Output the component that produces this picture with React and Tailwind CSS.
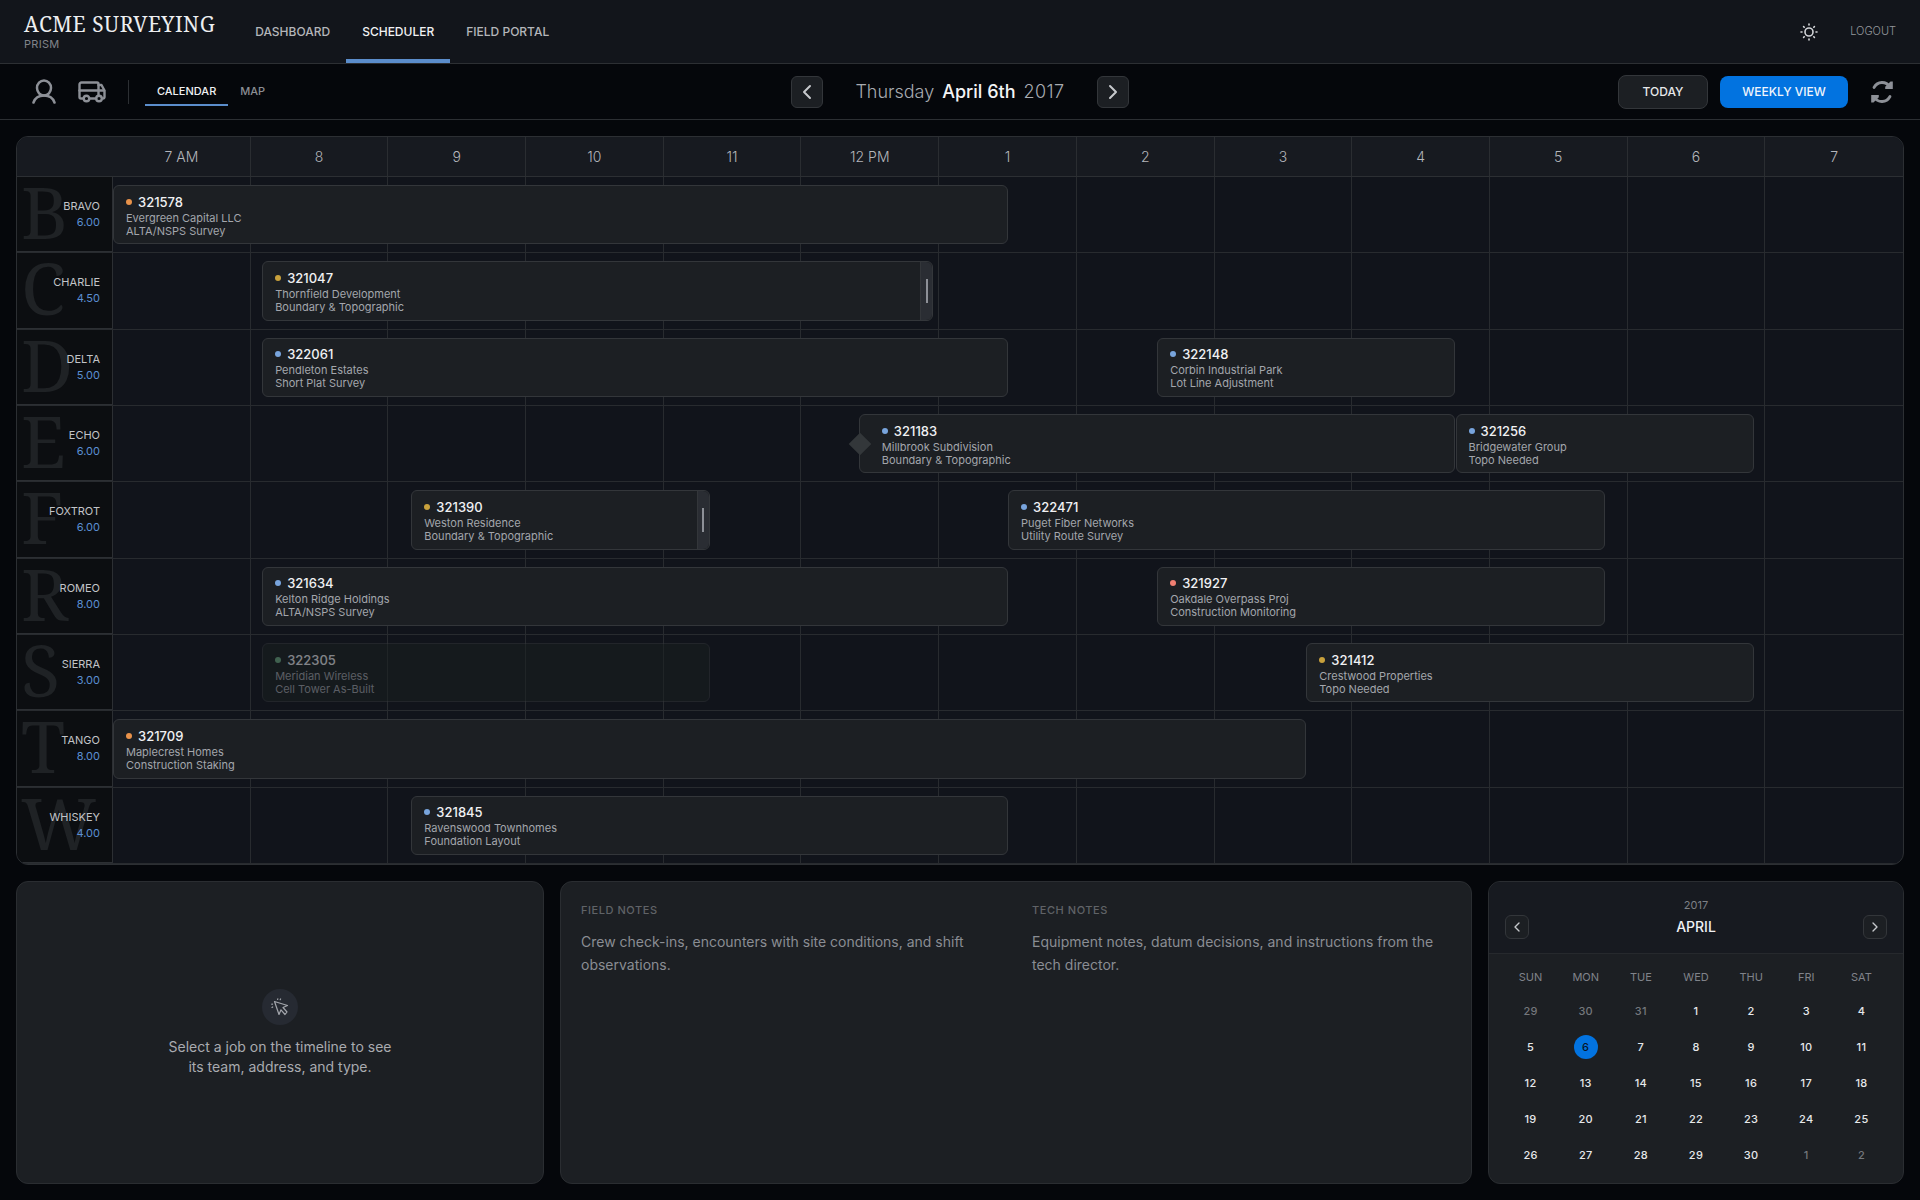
import React, { useState } from 'react';
import { ChevronLeft, ChevronRight } from 'lucide-react';

const HOURS = ['7 AM', '8', '9', '10', '11', '12 PM', '1', '2', '3', '4', '5', '6', '7'];
const WEEKDAYS = ['SUN', 'MON', 'TUE', 'WED', 'THU', 'FRI', 'SAT'];

// start and end are slots out of the 24 in the visible day
const SLOTS = 24;

const CREWS = [
  { name: 'BRAVO', hours: '6.00', jobs: [{ id: '321578', client: 'Evergreen Capital LLC', type: 'ALTA/NSPS Survey', dot: 'bg-[#e8924a]', start: 0, end: 12 }] },
  { name: 'CHARLIE', hours: '4.50', jobs: [{ id: '321047', client: 'Thornfield Development', type: 'Boundary & Topographic', dot: 'bg-[#c8a13c]', start: 2, end: 11, handle: true }] },
  {
    name: 'DELTA', hours: '5.00', jobs: [
      { id: '322061', client: 'Pendleton Estates', type: 'Short Plat Survey', dot: 'bg-[#78a4dc]', start: 2, end: 12 },
      { id: '322148', client: 'Corbin Industrial Park', type: 'Lot Line Adjustment', dot: 'bg-[#78a4dc]', start: 14, end: 18 },
    ],
  },
  {
    name: 'ECHO', hours: '6.00', jobs: [
      { id: '321183', client: 'Millbrook Subdivision', type: 'Boundary & Topographic', dot: 'bg-[#78a4dc]', start: 10, end: 18, linked: true },
      { id: '321256', client: 'Bridgewater Group', type: 'Topo Needed', dot: 'bg-[#78a4dc]', start: 18, end: 22 },
    ],
  },
  {
    name: 'FOXTROT', hours: '6.00', jobs: [
      { id: '321390', client: 'Weston Residence', type: 'Boundary & Topographic', dot: 'bg-[#c8a13c]', start: 4, end: 8, handle: true },
      { id: '322471', client: 'Puget Fiber Networks', type: 'Utility Route Survey', dot: 'bg-[#78a4dc]', start: 12, end: 20 },
    ],
  },
  {
    name: 'ROMEO', hours: '8.00', jobs: [
      { id: '321634', client: 'Kelton Ridge Holdings', type: 'ALTA/NSPS Survey', dot: 'bg-[#78a4dc]', start: 2, end: 12 },
      { id: '321927', client: 'Oakdale Overpass Proj', type: 'Construction Monitoring', dot: 'bg-[#f07f72]', start: 14, end: 20 },
    ],
  },
  {
    name: 'SIERRA', hours: '3.00', jobs: [
      { id: '322305', client: 'Meridian Wireless', type: 'Cell Tower As-Built', dot: 'bg-[#6fae84]', start: 2, end: 8, faded: true },
      { id: '321412', client: 'Crestwood Properties', type: 'Topo Needed', dot: 'bg-[#c8a13c]', start: 16, end: 22 },
    ],
  },
  { name: 'TANGO', hours: '8.00', jobs: [{ id: '321709', client: 'Maplecrest Homes', type: 'Construction Staking', dot: 'bg-[#e8924a]', start: 0, end: 16 }] },
  { name: 'WHISKEY', hours: '4.00', jobs: [{ id: '321845', client: 'Ravenswood Townhomes', type: 'Foundation Layout', dot: 'bg-[#78a4dc]', start: 4, end: 12 }] },
];

const WEEKS = [
  [29, 30, 31, 1, 2, 3, 4],
  [5, 6, 7, 8, 9, 10, 11],
  [12, 13, 14, 15, 16, 17, 18],
  [19, 20, 21, 22, 23, 24, 25],
  [26, 27, 28, 29, 30, 1, 2],
];

const App = () => {
  const [selectedDay, setSelectedDay] = useState(6);

  return (
    <div className="flex min-h-screen flex-col bg-[#05070b] font-['Inter',sans-serif] text-[#c6c8cc]">
      <TopNav />
      <Toolbar />
      <main className="flex flex-1 flex-col gap-4 p-4">
        <Timeline />
        <div className="grid h-[303px] grid-cols-[minmax(0,11fr)_minmax(0,19fr)_416px] gap-4">
          <EmptyDetails />
          <Notes />
          <MiniCalendar selectedDay={selectedDay} onSelect={setSelectedDay} />
        </div>
      </main>
    </div>
  );
};

const TopNav = () => (
  <header className="flex h-16 items-stretch border-b border-[#2c2f33] bg-[#12151b] px-6">
    <div className="flex flex-col justify-center">
      <div className="font-['Noto_Serif','DejaVu_Serif_Condensed','DejaVu_Serif',serif] text-[21px] leading-6 tracking-wide text-[#eceef0]">ACME SURVEYING</div>
      <div className="text-[11px] leading-4 tracking-wide text-[#80848a]">PRISM</div>
    </div>
    <nav className="ml-6 flex text-xs font-medium">
      <a href="#dashboard" className="flex items-center border-b-4 border-transparent px-4 pt-1 text-[#b4b6ba]">DASHBOARD</a>
      <a href="#scheduler" className="flex items-center border-b-4 border-[#5b8dcb] px-4 pt-1 text-[#f0f1f3]">SCHEDULER</a>
      <a href="#field" className="flex items-center border-b-4 border-transparent px-4 pt-1 text-[#b4b6ba]">FIELD PORTAL</a>
    </nav>
    <div className="ml-auto flex items-center gap-8">
      <button type="button" aria-label="Light mode" className="text-[#d2d4d8]">
        <SunIcon />
      </button>
      <button type="button" className="text-[11px] font-light text-[#94979c]">LOGOUT</button>
    </div>
  </header>
);

const Toolbar = () => (
  <div className="grid h-14 grid-cols-[1fr_auto_1fr] items-center border-b border-[#2c2f33] px-6">
    <div className="flex items-center pl-2">
      <button type="button" aria-label="Crews" className="text-[#8d9097]">
        <PersonIcon />
      </button>
      <button type="button" aria-label="Vehicles" className="ml-[22px] text-[#8d9097]">
        <TruckIcon />
      </button>
      <div className="ml-[22px] h-6 w-px bg-[#2c2f33]" />
      <div className="ml-4 flex text-[11px] font-medium">
        <button type="button" className="border-b-2 border-[#5b8dcb] px-3 leading-[26px] text-[#f0f1f3]">CALENDAR</button>
        <button type="button" className="border-b-2 border-transparent px-3 leading-[26px] text-[#8b8e94]">MAP</button>
      </div>
    </div>
    <div className="flex items-center gap-8">
      <SquareButton label="Previous day" className="h-8 w-8 text-[#c6c8cc]">
        <ChevronLeft size={24} strokeWidth={2} />
      </SquareButton>
      <h1 className="flex gap-2 text-lg leading-6 font-light text-[#a8abb1]">
        <span>Thursday</span>
        <span className="font-medium text-[#f3f4f6]">April 6th</span>
        <span className="tracking-wide">2017</span>
      </h1>
      <SquareButton label="Next day" className="h-8 w-8 text-[#c6c8cc]">
        <ChevronRight size={24} strokeWidth={2} />
      </SquareButton>
    </div>
    <div className="flex items-center justify-end gap-3 text-xs font-medium">
      <button type="button" className="h-[34px] w-[90px] rounded-lg border border-[#33363a] bg-[#1c1f23] text-[#e6e8ea]">TODAY</button>
      <button type="button" className="h-8 w-32 rounded-lg bg-[#0273e0] text-[#f0f5fb]">WEEKLY VIEW</button>
      <button type="button" aria-label="Refresh" className="mr-0.5 ml-2.5 text-[#8d9097]">
        <SyncIcon />
      </button>
    </div>
  </div>
);

const SquareButton = ({ label, className, children }) => (
  <button type="button" aria-label={label} className={`flex items-center justify-center rounded-md border border-[#33363a] bg-[#1c1f23] ${className}`}>
    {children}
  </button>
);

const Timeline = () => (
  <section className="flex flex-1 flex-col overflow-hidden rounded-xl border border-[#2c2f33] bg-[#11141b]">
    <div className="flex h-10 border-b border-[#2c2f33] bg-[#171a20] text-sm font-light text-[#b4b6bb]">
      <div className="w-24" />
      <div className="grid flex-1 grid-cols-13">
        {HOURS.map((hour) => (
          <div key={hour} className="flex items-center justify-center border-r border-[#2a2d31] last:border-r-0">{hour}</div>
        ))}
      </div>
    </div>
    <div className="grid flex-1 auto-rows-fr">
      {CREWS.map((crew) => <CrewRow key={crew.name} crew={crew} />)}
    </div>
  </section>
);

const CrewRow = ({ crew }) => (
  <div className="flex border-b border-[#282b2f]">
    <div className="relative flex w-24 flex-col items-end justify-center border-r border-b border-[#2c2f33] bg-[#0c0e11] pr-3 text-[11px]">
      <span aria-hidden="true" className="absolute top-0 left-1 font-['Noto_Serif','DejaVu_Serif_Condensed','DejaVu_Serif',serif] text-[72px] leading-[68px] text-[#1f2225]">{crew.name[0]}</span>
      <span className="relative leading-4 text-[#c2c4c8]">{crew.name}</span>
      <span className="relative leading-4 text-[#5b8fd2]">{crew.hours}</span>
    </div>
    <div className="relative grid flex-1 grid-cols-13">
      {HOURS.map((hour) => (
        <div key={hour} className="border-r border-[#282b2f] [&:nth-child(13)]:border-r-0" />
      ))}
      {crew.jobs.map((job) => <JobCard key={job.id} job={job} />)}
    </div>
  </div>
);

const JobCard = ({ job }) => (
  <button
    type="button"
    className={`absolute inset-y-2 rounded-md border border-[#33363a] text-left ${job.linked ? 'pl-[22px]' : 'pl-3'} ${job.faded ? 'bg-[#1a2020] opacity-50' : 'bg-[#1c1f23]'}`}
    style={{ left: `${(job.start / SLOTS) * 100}%`, width: `${((job.end - job.start) / SLOTS) * 100}%` }}
  >
    <span className="flex items-center gap-1.5 text-[13px] leading-5 font-medium text-[#f0f1f3]">
      <span className={`h-1.5 w-1.5 rounded-full ${job.dot}`} />
      {job.id}
    </span>
    <span className="block text-[11px] leading-[13px] text-[#a3a6ac]">{job.client}</span>
    <span className="block text-[11px] leading-[13px] text-[#a3a6ac]">{job.type}</span>
    {job.linked && <span className="absolute top-1/2 left-0 h-4 w-4 -translate-x-1/2 -translate-y-1/2 rotate-45 bg-[#33373a]" />}
    {job.handle && (
      <span className="absolute inset-y-0 right-0 flex w-3 items-center justify-center rounded-r-md border-l border-[#33363a] bg-[#2a2d33]">
        <span className="h-6 w-0.5 bg-[#8d9097]" />
      </span>
    )}
  </button>
);

const EmptyDetails = () => (
  <section className="flex flex-col items-center justify-center gap-3 rounded-xl border border-[#2a2d31] bg-[#1c1f23] text-center">
    <span className="flex h-9 w-9 items-center justify-center rounded-full bg-[#262a32] text-[#a3a6ac]">
      <CursorIcon />
    </span>
    <p className="w-60 text-sm leading-5 text-[#a9abb0]">Select a job on the timeline to see its team, address, and type.</p>
  </section>
);

const Notes = () => (
  <section className="grid grid-cols-2 gap-8 rounded-xl border border-[#2a2d31] bg-[#1c1f23] p-5">
    <div>
      <h2 className="text-[11px] leading-4 font-medium tracking-wider text-[#606367]">FIELD NOTES</h2>
      <p className="mt-3 text-sm leading-[23px] text-[#8a8d93]">Crew check-ins, encounters with site conditions, and shift observations.</p>
    </div>
    <div>
      <h2 className="text-[11px] leading-4 font-medium tracking-wider text-[#606367]">TECH NOTES</h2>
      <p className="mt-3 text-sm leading-[23px] text-[#8a8d93]">Equipment notes, datum decisions, and instructions from the tech director.</p>
    </div>
  </section>
);

const MiniCalendar = ({ selectedDay, onSelect }) => (
  <section className="overflow-hidden rounded-xl border border-[#2a2d31] bg-[#1c1f23]">
    <div className="flex h-[72px] items-end justify-between border-b border-[#26292d] bg-[#171a20] px-4 pb-[14px]">
      <SquareButton label="Previous month" className="h-6 w-6 text-[#c6c8cc]">
        <ChevronLeft size={16} />
      </SquareButton>
      <div className="text-center">
        <div className="text-[11px] leading-4 text-[#7d8086]">2017</div>
        <div className="mt-0.5 text-sm leading-6 font-medium text-[#f0f1f3]">APRIL</div>
      </div>
      <SquareButton label="Next month" className="h-6 w-6 text-[#c6c8cc]">
        <ChevronRight size={16} />
      </SquareButton>
    </div>
    <div className="px-[14px] pt-2">
      <table className="w-full table-fixed text-center text-[11px]">
        <thead>
          <tr>
            {WEEKDAYS.map((day) => <th key={day} className="h-[31px] p-0 text-center font-normal text-[#80838a]">{day}</th>)}
          </tr>
        </thead>
        <tbody>
          {WEEKS.map((week, i) => (
            <tr key={i}>
              {week.map((day) => {
                const outside = (i === 0 && day > 7) || (i === 4 && day < 7);
                const selected = !outside && day === selectedDay;
                return (
                  <td key={day} className="h-9 p-0">
                    <button
                      type="button"
                      onClick={() => !outside && onSelect(day)}
                      className={`h-6 w-6 rounded-full align-middle font-medium tracking-wide ${selected ? 'bg-[#0273e0] text-[#071426]' : outside ? 'text-[#74777c]' : 'text-[#e6e8ea]'}`}
                    >
                      {day}
                    </button>
                  </td>
                );
              })}
            </tr>
          ))}
        </tbody>
      </table>
    </div>
  </section>
);

const SunIcon = () => (
  <svg width="18" height="18" viewBox="0 0 18 18" fill="none" stroke="currentColor" strokeWidth="1.6" strokeLinecap="round">
    <circle cx="9" cy="9" r="4" />
    <path d="M9 1V2M9 16V17M1 9H2M16 9H17M3.600 3.600L4.200 4.200M13.800 13.800L14.400 14.400M14.400 3.600L13.800 4.200M4.200 13.800L3.600 14.400" />
  </svg>
);

const PersonIcon = () => (
  <svg width="24" height="28" viewBox="0 0 24 28" fill="none" stroke="currentColor" strokeWidth="2.5" strokeLinecap="round">
    <ellipse cx="12" cy="10" rx="7" ry="7.5" />
    <path d="M1.500 24.500C3 20 7 17.500 12 17.500S21 20 22.500 24.500" />
  </svg>
);

const TruckIcon = () => (
  <svg width="28" height="24" viewBox="0 0 28 24" fill="none" stroke="currentColor" strokeWidth="2.4" strokeLinecap="round" strokeLinejoin="round">
    <path d="M5 18.500H3A1.500 1.500 0 0 1 1.500 17V4.500A2 2 0 0 1 3.500 2.500H19A1.500 1.500 0 0 1 20.500 4V15" />
    <path d="M11.500 18.500H18" />
    <path d="M1.500 10.500H26" />
    <path d="M20.500 5H23.500L26.500 10.500V17A1.500 1.500 0 0 1 25 18.500" />
    <circle cx="8.500" cy="18.500" r="2.800" />
    <circle cx="21" cy="18.500" r="2.800" />
  </svg>
);

const SyncIcon = () => (
  <svg width="24" height="24" viewBox="0 0 24 24" fill="none" stroke="currentColor" strokeWidth="2.8">
    <path d="M4 7.500C7.500 1 16 0.800 20 7" strokeLinecap="round" />
    <path d="M22.800 1.500V9H15.200V6.800L20.500 1.500Z" fill="currentColor" stroke="none" />
    <path d="M20 16.500C16.500 23 8 23.200 4 17" strokeLinecap="round" />
    <path d="M1.200 22.500V15H8.800V17.200L3.500 22.500Z" fill="currentColor" stroke="none" />
  </svg>
);

const CursorIcon = () => (
  <svg width="18" height="18" viewBox="0 0 18 18" fill="none" stroke="currentColor" strokeWidth="1.2" strokeLinecap="round" strokeLinejoin="round">
    <path d="M3.500 3.500L16.500 7.500L12 9.500L16 14L14 16.500L10 11.800L8 16.500Z" />
    <path d="M6.800 0.800L6.600 1.500M9.600 1L9.200 1.700M0.800 6.200H1.500M1 9.400L1.700 9" />
  </svg>
);

export default App;
